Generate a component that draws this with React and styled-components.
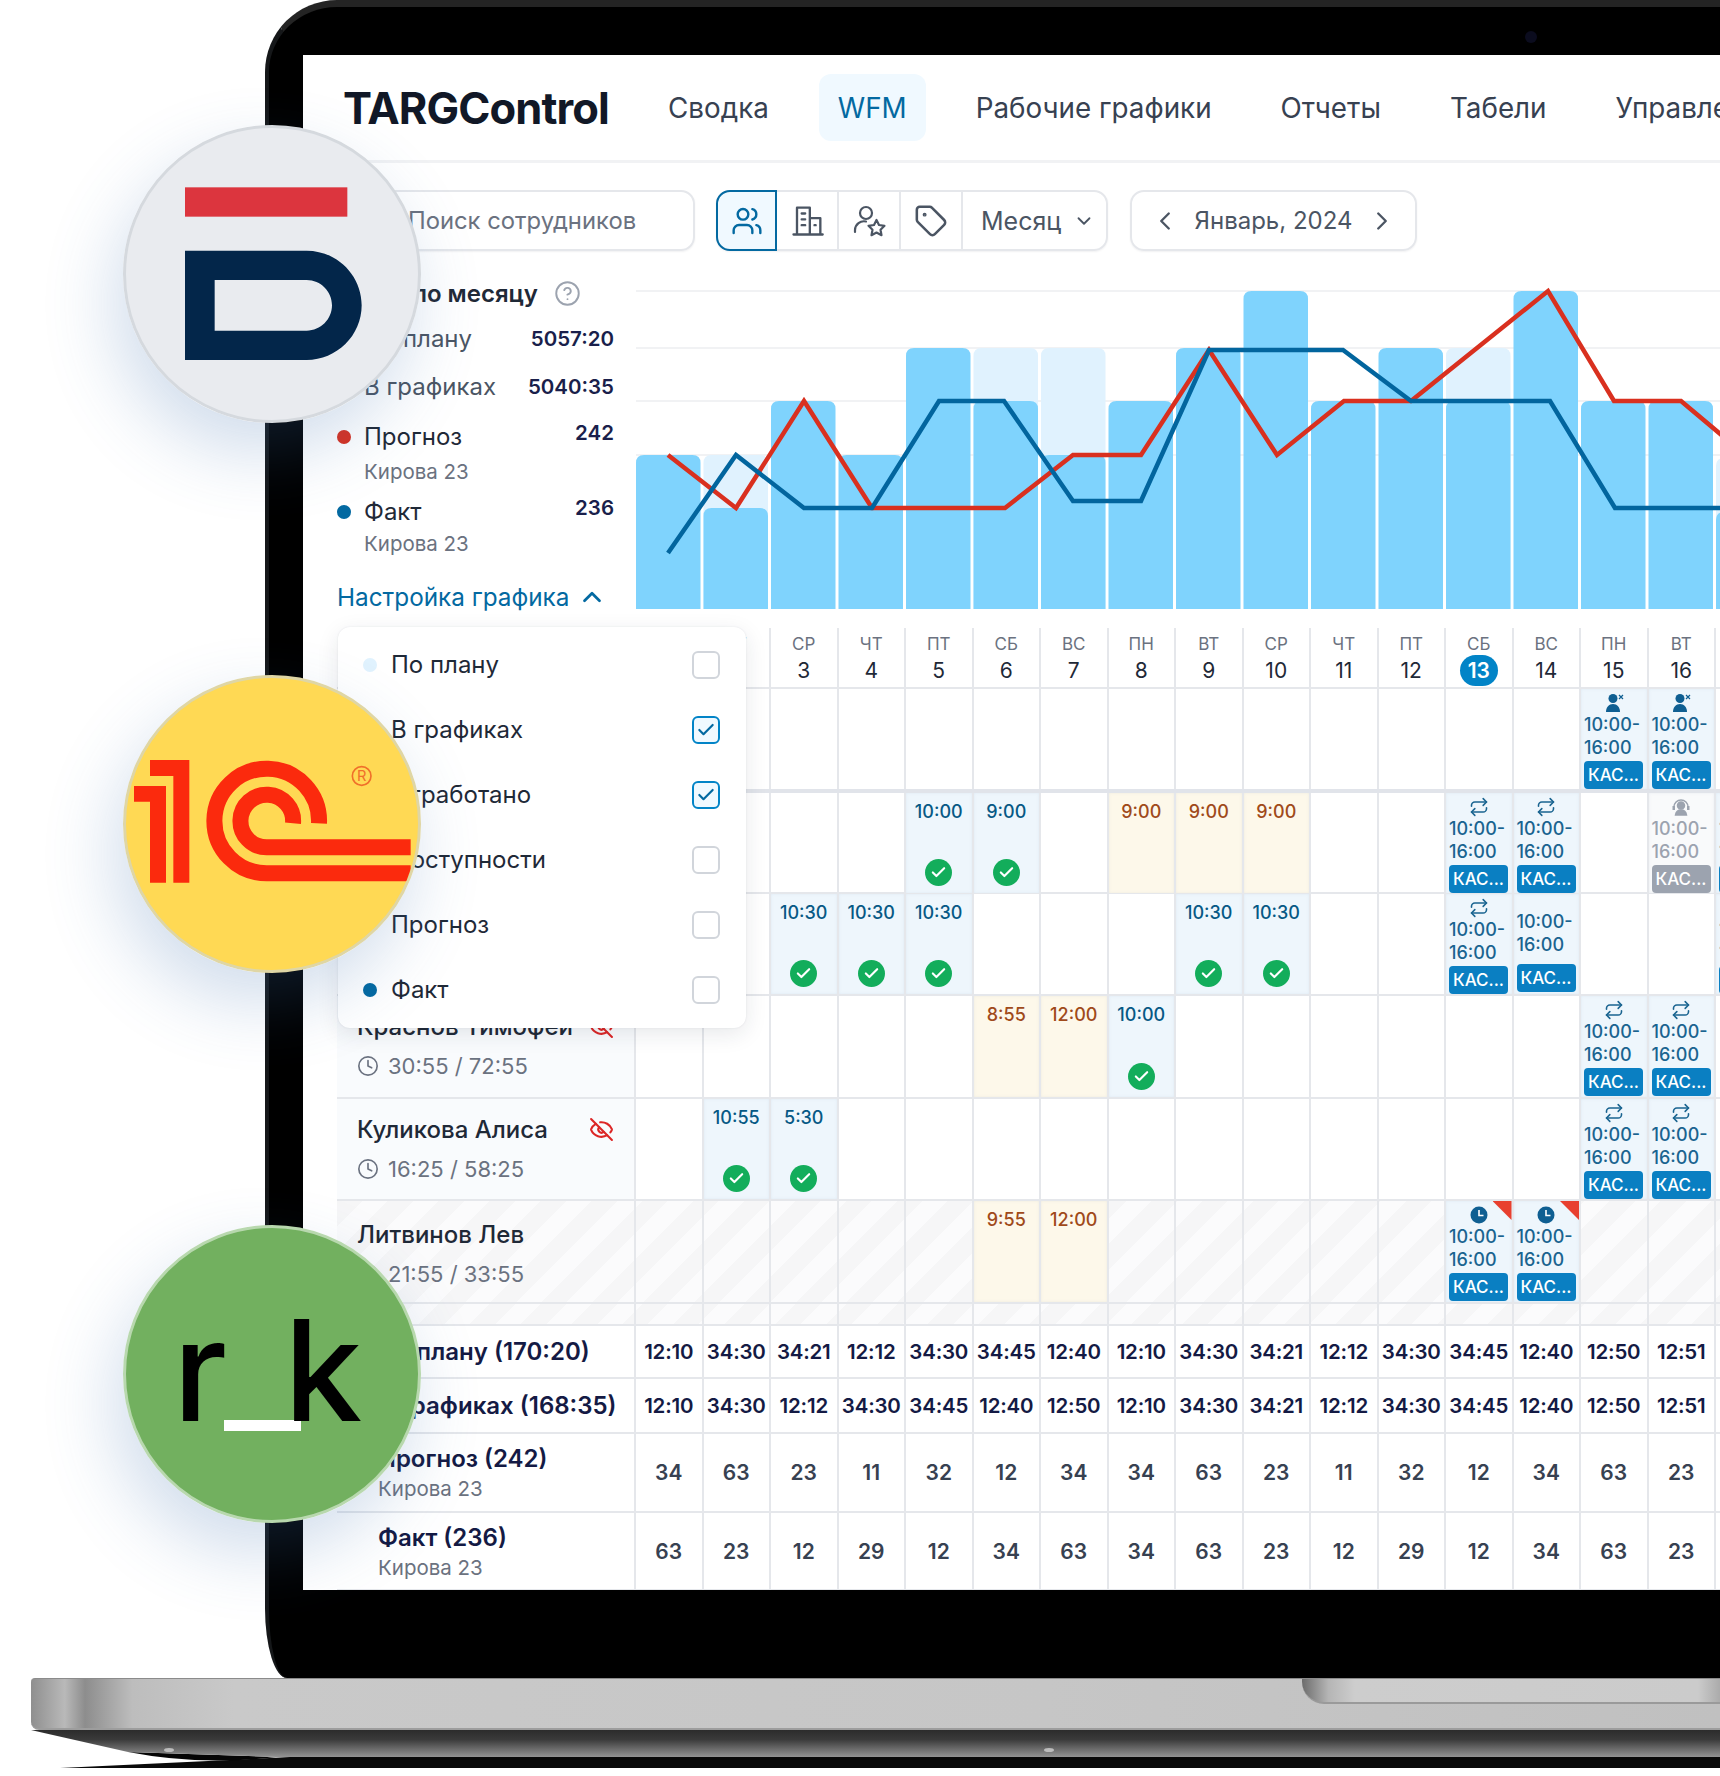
import React from 'react';
import styled, { createGlobalStyle } from 'styled-components';
import {
  Users, Tag, ChevronDown, ChevronLeft, ChevronRight, ChevronUp,
  CircleHelp, Clock, EyeOff, Repeat, Check,
} from 'lucide-react';

const GlobalStyle = createGlobalStyle`
  html, body { margin: 0; padding: 0; background: #fff; }
  * { box-sizing: border-box; }
  body { font-family: Inter, "Noto Sans", sans-serif; color: #1f2937; }
`;

const Page = styled.div`
  position: relative;
  width: 1720px;
  height: 1776px;
  overflow: hidden;
  background: #fff;
`;

const LidRow = styled.div`
  padding-left: 265px;
`;

const Lid = styled.div`
  position: relative;
  width: 1455px;
  height: 1678px;
  background: #000;
  border-top: 7px solid #242424;
  border-left: 4px solid #151719;
  border-radius: 72px 0 0 0 / 72px 0 0 0;
  border-bottom-left-radius: 22px 70px;
  padding: 48px 0 88px 34px;
`;

const Camera = styled.div`
  position: absolute;
  left: 1256px;
  top: 24px;
  width: 12px;
  height: 12px;
  border-radius: 50%;
  background: #0b0c1e;
`;

const Screen = styled.div`
  position: relative;
  width: 1417px;
  height: 1535px;
  background: #fff;
  overflow: hidden;
`;

/* top nav */
const Nav = styled.nav`
  height: 108px;
  display: flex;
  align-items: center;
  padding-left: 40px;
  gap: 31px;
  border-bottom: 3px solid #f1f2f4;
`;

const Logo = styled.div`
  flex-shrink: 0;
  width: 261px;
  margin-right: 14px;
  font-size: 43.5px;
  font-weight: 700;
  letter-spacing: -0.9px;
  color: #111827;
  white-space: nowrap;
`;

const NavItem = styled.div`
  flex-shrink: 0;
  height: 67px;
  padding: 0 19px;
  display: flex;
  align-items: center;
  border-radius: 12px;
  font-size: 27.8px;
  white-space: nowrap;
  color: ${p => (p.$active ? '#0369a1' : '#374151')};
  background: ${p => (p.$active ? '#f0f9ff' : 'transparent')};
`;

/* toolbar */
const Toolbar = styled.div`
  display: flex;
  margin: 27px 0 0 34px;
`;

const Search = styled.div`
  width: 358px;
  height: 61px;
  margin-right: 21px;
  padding-left: 69px;
  display: flex;
  align-items: center;
  border: 2px solid #e5e7eb;
  border-radius: 14px;
  box-shadow: 0 1px 2px rgba(17, 24, 39, .06);
  font-size: 23.8px;
  color: #6b7280;
`;

const ButtonGroup = styled.div`
  display: flex;
  height: 61px;
  margin-right: 22px;
  border: 2px solid #e5e7eb;
  border-radius: 14px;
  box-shadow: 0 1px 2px rgba(17, 24, 39, .06);
`;

const ToolButton = styled.div`
  width: ${p => (p.$active ? '61px' : '62px')};
  margin: ${p => (p.$active ? '-2px 0 -2px -2px' : '0')};
  display: flex;
  align-items: center;
  justify-content: center;
  color: ${p => (p.$active ? '#0369a1' : '#4b5563')};
  background: ${p => (p.$active ? '#f0f9ff' : 'transparent')};
  border: ${p => (p.$active ? '2px solid #0369a1' : 'none')};
  border-right: ${p => (p.$active ? '2px solid #0369a1' : '2px solid #e5e7eb')};
  border-radius: ${p => (p.$active ? '14px 0 0 14px' : '0')};
`;

const MonthSelect = styled.div`
  width: 143px;
  padding-left: 18px;
  display: flex;
  align-items: center;
  gap: 12px;
  font-size: 25px;
  color: #4b5563;
`;

const DatePicker = styled.div`
  width: 287px;
  height: 61px;
  padding: 0 18px;
  display: flex;
  align-items: center;
  justify-content: space-between;
  border: 2px solid #e5e7eb;
  border-radius: 14px;
  box-shadow: 0 1px 2px rgba(17, 24, 39, .06);
  font-size: 24px;
  color: #4b5563;
`;

/* summary + chart */
const ChartRow = styled.div`
  display: flex;
  height: 350px;
  margin: 27px 0 0 34px;
`;

const Summary = styled.div`
  width: 277px;
  margin-right: 22px;
  flex-shrink: 0;
`;

const SummaryTitle = styled.div`
  display: flex;
  align-items: center;
  gap: 16px;
  height: 30px;
  font-size: 24px;
  font-weight: 600;
  color: #1f2937;
  svg { color: #9ca3af; }
`;

const SummaryRow = styled.div`
  display: flex;
  justify-content: space-between;
  margin-top: ${p => p.$mt}px;
  padding-left: 27px;
`;

const SummaryLabel = styled.div`
  position: relative;
  line-height: 30px;
  font-size: 24px;
  color: ${p => (p.$strong ? '#1f2937' : '#4b5563')};
`;

const SummaryDot = styled.span`
  position: absolute;
  left: -27px;
  top: 8px;
  width: 14px;
  height: 14px;
  border-radius: 50%;
  background: ${p => p.$color};
`;

const SummaryValue = styled.div`
  line-height: ${p => (p.$top ? '22px' : '30px')};
  align-self: flex-start;
  font-size: 20.5px;
  font-weight: 600;
  color: #1a1f4b;
`;

const SummarySub = styled.div`
  margin-top: ${p => p.$mt}px;
  padding-left: 27px;
  line-height: 22px;
  font-size: 20.5px;
  color: #6b7280;
`;

const ChartToggle = styled.div`
  display: flex;
  align-items: center;
  gap: 8px;
  height: 30px;
  margin-top: 27px;
  font-size: 24.3px;
  white-space: nowrap;
  color: #0369a1;
`;

const ChartSvg = styled.svg`
  display: block;
  flex-shrink: 0;
  width: 1084px;
  height: 331px;
`;

/* table */
const TableWrap = styled.div`
  position: relative;
  margin-left: 34px;
`;

const Row = styled.div`
  display: grid;
  grid-template-columns: 297px repeat(17, 67.5px);
  height: ${p => p.$h}px;
  border-bottom: ${p => p.$thick ? '4px solid #e1e4ea' : '2px solid #e5e7eb'};
  background: ${p => p.$striped
    ? 'repeating-linear-gradient(135deg, #f6f6f7 0 18px, #fbfbfc 18px 36px)'
    : 'transparent'};
`;

const LeftCell = styled.div`
  position: relative;
  padding: ${p => p.$pt ?? 16}px 20px 0 20px;
  background: ${p => (p.$tint ? '#f9fbfd' : 'transparent')};
`;

const Name = styled.div`
  line-height: 30px;
  font-size: 24px;
  font-weight: 500;
  color: #1f2937;
`;

const EyeIcon = styled.span`
  position: absolute;
  right: 20px;
  top: 18px;
  color: #dc2626;
  line-height: 0;
`;

const Hours = styled.div`
  display: flex;
  align-items: center;
  gap: 9px;
  margin-top: 11px;
  line-height: 26px;
  font-size: 22px;
  color: #6b7280;
  svg { color: #6b7280; }
`;

const DayCell = styled.div`
  position: relative;
  min-width: 0;
  border-left: 2px solid #e5e7eb;
  display: flex;
  flex-direction: column;
  align-items: center;
  ${p => p.$center && 'justify-content: center;'}
`;

const HeadDay = styled.div`
  margin-top: 5px;
  line-height: 22px;
  font-size: 17px;
  color: #6b7280;
`;

const HeadNum = styled.div`
  display: flex;
  align-items: center;
  justify-content: center;
  width: 38px;
  height: 31px;
  border-radius: 16px;
  font-size: 21px;
  color: ${p => (p.$today ? '#fff' : '#1f2937')};
  background: ${p => (p.$today ? '#0284c7' : 'transparent')};
  font-weight: ${p => (p.$today ? 600 : 400)};
`;

const Shift = styled.div`
  align-self: stretch;
  flex: 1;
  display: flex;
  flex-direction: column;
  align-items: center;
  padding: 8px 0 7px;
  background: ${p => (p.$plan ? '#fdf8ea' : '#eef6fc')};
  box-shadow: inset 0 0 3px rgba(100, 130, 160, .10);
`;

const ShiftTime = styled.div`
  line-height: 22px;
  font-size: 18px;
  font-weight: 500;
  color: ${p => (p.$plan ? '#a04a1a' : '#075985')};
`;

const ShiftDone = styled.div`
  margin-top: auto;
  width: 27px;
  height: 27px;
  border-radius: 50%;
  background: #13ad5b;
  color: #fff;
  display: flex;
  align-items: center;
  justify-content: center;
`;

const Roster = styled.div`
  position: relative;
  align-self: stretch;
  flex: 1;
  padding: ${p => (p.$noIcon ? '16px' : '3px')} 2px 0 2px;
  background: ${p => (p.$muted ? '#f9fafb' : '#eef6fc')};
  box-shadow: inset 0 0 3px rgba(100, 130, 160, .10);
  color: ${p => (p.$muted ? '#9ca3af' : '#1a6490')};
`;

const RosterIcon = styled.div`
  height: 21px;
  display: flex;
  align-items: center;
  justify-content: center;
`;

const RosterTime = styled.div`
  padding-left: 1px;
  line-height: 23px;
  font-size: 18px;
  font-weight: 500;
  white-space: nowrap;
`;

const RosterTag = styled.div`
  width: 59px;
  height: 28px;
  margin-top: ${p => (p.$noIcon ? '8px' : '2px')};
  margin-left: 1px;
  display: flex;
  align-items: center;
  justify-content: center;
  border-radius: 4px;
  font-size: 17px;
  font-weight: 500;
  color: #fff;
  background: ${p => (p.$muted ? '#9ca3af' : '#0a7fc2')};
`;

const Corner = styled.span`
  position: absolute;
  right: 0;
  top: 0;
  width: 19px;
  height: 19px;
  background: #e8402f;
  clip-path: polygon(0 0, 100% 0, 100% 100%);
`;

const TotalLeft = styled.div`
  padding-left: 41px;
  display: flex;
  flex-direction: column;
  justify-content: center;
`;

const TotalName = styled.div`
  line-height: 30px;
  font-size: 24px;
  font-weight: 600;
  color: #141a44;
  white-space: nowrap;
`;

const TotalSub = styled.div`
  margin-top: 3px;
  line-height: 24px;
  font-size: 20.5px;
  color: #6b7280;
`;

const TotalValue = styled.div`
  font-size: ${p => (p.$time ? '20.5px' : '21px')};
  font-weight: 600;
  letter-spacing: ${p => (p.$time ? '-0.2px' : '0')};
  color: ${p => (p.$time ? '#141a44' : '#374151')};
  white-space: nowrap;
`;

/* chart settings popup */
const Dropdown = styled.div`
  position: absolute;
  left: 1px;
  top: -1px;
  width: 408px;
  height: 401px;
  padding: 5px 26px 0 25px;
  background: #fff;
  border-radius: 12px;
  box-shadow: 0 6px 22px rgba(31, 41, 55, .10), 0 0 2px rgba(31, 41, 55, .10);
  z-index: 2;
`;

const DropdownRow = styled.div`
  height: 65px;
  display: flex;
  align-items: center;
  font-size: 24px;
  color: #1f2937;
`;

const DropdownDot = styled.span`
  width: 14px;
  height: 14px;
  margin-right: 14px;
  border-radius: 50%;
  background: ${p => p.$color};
`;

const Checkbox = styled.span`
  width: 28px;
  height: 28px;
  margin-left: auto;
  display: flex;
  align-items: center;
  justify-content: center;
  border-radius: 6px;
  border: 2px solid ${p => (p.$on ? '#0284c7' : '#d1d5db')};
  background: ${p => (p.$on ? '#f0f9ff' : '#fff')};
  color: #0369a1;
`;

/* logos over the laptop */
const Badge = styled.div`
  position: absolute;
  left: ${p => p.$x}px;
  top: ${p => p.$y}px;
  width: 298px;
  height: 298px;
  border-radius: 50%;
  overflow: hidden;
  border: 3px solid ${p => p.$ring};
  background: ${p => p.$bg};
  z-index: 3;
`;

const BadgeShadow = styled.div`
  position: absolute;
  left: ${p => p.$x}px;
  top: ${p => p.$y}px;
  width: 298px;
  height: 298px;
  border-radius: 50%;
  box-shadow: -10px 30px 70px rgba(62, 112, 176, .24);
  z-index: 3;
`;

const BadgeLogo = styled.svg`
  display: block;
  width: 100%;
  height: 100%;
`;

const RkLogo = styled.div`
  position: relative;
  height: 100%;
  font-family: Inter, sans-serif;
  font-size: 140px;
  font-weight: 500;
  line-height: 1;
  color: #000;
`;

const RkLetter = styled.span`
  position: absolute;
  top: ${p => p.$top}px;
  left: ${p => p.$left}px;
`;

const RkBar = styled.span`
  position: absolute;
  left: 98px;
  top: 192px;
  width: 77px;
  height: 11px;
  background: #fff;
`;

/* laptop base */
const Base = styled.div`
  position: relative;
  height: 52px;
  margin-left: 31px;
  border-top: 1px solid #8b8b8b;
  border-bottom: 2px solid #9d9d9d;
  border-radius: 4px 0 0 8px;
  background: linear-gradient(90deg, #8f8f8f 0, #b9b9b9 2%, #8d8d8d 3.2%, #bdbdbd 6%, #c9c9c9 12%, #c6c6c6 60%, #c0c0c0 100%);
`;

const BaseNotch = styled.div`
  position: absolute;
  left: 1271px;
  top: 0;
  width: 440px;
  height: 25px;
  border-radius: 0 0 22px 22px;
  border-bottom: 2px solid #9a9a9a;
  background: linear-gradient(90deg, #6c6c6c 0, #b5b5b5 6%, #cdcdcd 12%, #cbcbcb 90%, #8b8b8b 100%);
`;

const FrontSvg = styled.svg`
  display: block;
  width: 1720px;
  height: 38px;
`;

const barPath = (x, top) => {
  const w = 64.5, r = 8;
  return `M${x} 609V${top + r}Q${x} ${top} ${x + r} ${top}H${x + w - r}Q${x + w} ${top} ${x + w} ${top + r}V609Z`;
};

const darkTops = [455, 508, 401, 455, 348, 401, 455, 401, 348, 291, 401, 348, 401, 291, 401, 401, 512];
const lightTops = { 1: 455, 5: 348, 6: 348, 12: 348, 16: 458 };
const redLine = '668,455 736,508 804,401 872,508 1005,508 1073,455 1141,455 1209,350 1277,455 1344,401 1411,401 1548,291 1614,401 1681,401 1749,458';
const blueLine = '668,553 736,455 804,508 872,508 939,401 1004,401 1073,501 1141,501 1209,350 1343,350 1411,401 1550,401 1615,508 1760,508';

const Chart = () => (
  <ChartSvg viewBox="636 278 1084 331">
    {[291, 348, 401, 455].map(y => (
      <line key={y} x1="636" x2="1720" y1={y} y2={y} stroke="#f1f2f4" strokeWidth="2" />
    ))}
    {Object.entries(lightTops).map(([i, top]) => (
      <path key={i} d={barPath(636 + 67.5 * i, top)} fill="#e0f2fe" />
    ))}
    {darkTops.map((top, i) => (
      <path key={i} d={barPath(636 + 67.5 * i, top)} fill="#7fd3fd" />
    ))}
    <polyline points={redLine} fill="none" stroke="#d9301f" strokeWidth="4.5" strokeLinejoin="miter" />
    <polyline points={blueLine} fill="none" stroke="#02659e" strokeWidth="4.5" strokeLinejoin="miter" />
  </ChartSvg>
);

const BuildingIcon = () => (
  <svg width="35" height="35" viewBox="0 0 30 30" fill="none" stroke="currentColor" strokeWidth="2" strokeLinejoin="round" strokeLinecap="round">
    <path d="M3 27h25M6 27V4h11v23M17 13h9v14" />
    <path d="M10 9h3M10 14h3M10 19h3M21 19h1" />
  </svg>
);

const UserStarIcon = () => (
  <svg width="34" height="34" viewBox="0 0 34 34" fill="none" stroke="currentColor" strokeWidth="2.2" strokeLinejoin="round" strokeLinecap="round">
    <circle cx="14" cy="9" r="6" />
    <path d="M3 28v-2a9 9 0 0 1 11-8.500" />
    <path d="M24.500 16l2.500 5 5.500.8-4 3.900 1 5.500-5-2.600-5 2.600 1-5.500-4-3.900 5.500-.8z" />
  </svg>
);

const UserXIcon = () => (
  <svg width="20" height="20" viewBox="0 0 20 20" fill="#0f5f92">
    <circle cx="9" cy="5.500" r="4.500" />
    <path d="M2 19c0-5 3-8 7-8s7 3 7 8z" />
    <path d="M15 2l4 4M19 2l-4 4" stroke="#0f5f92" strokeWidth="1.200" />
  </svg>
);

const HeadsetIcon = () => (
  <svg width="20" height="20" viewBox="0 0 20 20" fill="none" stroke="#9ca3af" strokeWidth="1.500">
    <path d="M3 10a7 7 0 0 1 14 0" />
    <circle cx="10" cy="8.500" r="3.500" fill="#9ca3af" />
    <path d="M4.500 18c.5-3.500 2.500-5 5.500-5s5 1.500 5.500 5z" fill="#9ca3af" />
    <rect x="1.500" y="9" width="2.500" height="4" fill="#9ca3af" stroke="none" />
    <rect x="16" y="9" width="2.500" height="4" fill="#9ca3af" stroke="none" />
  </svg>
);

const ClockFilled = () => (
  <svg width="18" height="18" viewBox="0 0 18 18">
    <circle cx="9" cy="9" r="8.500" fill="#0f5f92" />
    <path d="M9 4v5.500h4.500" fill="none" stroke="#fff" strokeWidth="1.600" />
  </svg>
);

const rosterIcons = {
  swap: <Repeat size={20} strokeWidth={1.9} />,
  userx: <UserXIcon />,
  headset: <HeadsetIcon />,
  clock: <ClockFilled />,
};

const RosterCell = ({ icon, muted, noIcon, corner }) => (
  <Roster $muted={muted} $noIcon={noIcon}>
    {corner && <Corner />}
    {!noIcon && <RosterIcon>{rosterIcons[icon]}</RosterIcon>}
    <RosterTime>10:00-</RosterTime>
    <RosterTime>16:00</RosterTime>
    <RosterTag $muted={muted} $noIcon={noIcon}>КАС...</RosterTag>
  </Roster>
);

const ShiftCell = ({ time, plan }) => (
  <Shift $plan={plan}>
    <ShiftTime $plan={plan}>{time}</ShiftTime>
    {!plan && (
      <ShiftDone>
        <Check size={17} strokeWidth={3} />
      </ShiftDone>
    )}
  </Shift>
);

const s = (time) => ({ kind: 'shift', time });
const p = (time) => ({ kind: 'plan', time });
const r = (icon, extra = {}) => ({ kind: 'roster', icon, ...extra });

const staffRows = [
  { h: 104, thick: true, cells: { 15: r('userx'), 16: r('userx') } },
  {
    h: 101,
    cells: {
      5: s('10:00'), 6: s('9:00'), 8: p('9:00'), 9: p('9:00'), 10: p('9:00'),
      13: r('swap'), 14: r('swap'), 16: r('headset', { muted: true }), 17: r('swap'),
    },
  },
  {
    h: 102,
    cells: {
      3: s('10:30'), 4: s('10:30'), 5: s('10:30'), 9: s('10:30'), 10: s('10:30'),
      13: r('swap'), 14: r('swap', { noIcon: true }), 17: r('swap'),
    },
  },
  {
    h: 103, name: 'Краснов Тимофей', hours: '30:55 / 72:55', hidden: true, tint: true,
    cells: { 6: p('8:55'), 7: p('12:00'), 8: s('10:00'), 15: r('swap'), 16: r('swap') },
  },
  {
    h: 102, name: 'Куликова Алиса', hours: '16:25 / 58:25', hidden: true, tint: true,
    cells: { 2: s('10:55'), 3: s('5:30'), 15: r('swap'), 16: r('swap') },
  },
  {
    h: 103, name: 'Литвинов Лев', hours: '21:55 / 33:55', striped: true, pt: 19,
    cells: {
      6: p('9:55'), 7: p('12:00'),
      13: r('clock', { corner: true }), 14: r('clock', { corner: true }),
    },
  },
];

const days = Array.from({ length: 17 }, (_, i) => i + 1);
const weekNames = ['ПН', 'ВТ', 'СР', 'ЧТ', 'ПТ', 'СБ', 'ВС'];

const totals = [
  {
    h: 53, name: 'По плану (170:20)', time: true,
    values: ['12:10', '34:30', '34:21', '12:12', '34:30', '34:45', '12:40', '12:10', '34:30', '34:21', '12:12', '34:30', '34:45', '12:40', '12:50', '12:51'],
  },
  {
    h: 55, name: 'В графиках (168:35)', time: true,
    values: ['12:10', '34:30', '12:12', '34:30', '34:45', '12:40', '12:50', '12:10', '34:30', '34:21', '12:12', '34:30', '34:45', '12:40', '12:50', '12:51'],
  },
  {
    h: 79, name: 'Прогноз (242)', sub: 'Кирова 23',
    values: ['34', '63', '23', '11', '32', '12', '34', '34', '63', '23', '11', '32', '12', '34', '63', '23'],
  },
  {
    h: 78, name: 'Факт (236)', sub: 'Кирова 23',
    values: ['63', '23', '12', '29', '12', '34', '63', '34', '63', '23', '12', '29', '12', '34', '63', '23'],
  },
];

const chartOptions = [
  { label: 'По плану', color: '#e0f2fe' },
  { label: 'В графиках', color: '#7fd3fd', on: true },
  { label: 'Отработано', color: '#7fd3fd', on: true },
  { label: 'Доступности', color: '#fde68a' },
  { label: 'Прогноз', color: '#d9301f' },
  { label: 'Факт', color: '#0369a1' },
];

const renderCell = (cell) => {
  if (!cell) return null;
  if (cell.kind === 'roster') return <RosterCell {...cell} />;
  return <ShiftCell time={cell.time} plan={cell.kind === 'plan'} />;
};

export default function App() {
  return (
    <Page>
      <GlobalStyle />
      <LidRow>
        <Lid>
          <Camera />
          <Screen>
            <Nav>
              <Logo>TARGControl</Logo>
              <NavItem>Сводка</NavItem>
              <NavItem $active>WFM</NavItem>
              <NavItem>Рабочие графики</NavItem>
              <NavItem>Отчеты</NavItem>
              <NavItem>Табели</NavItem>
              <NavItem>Управление</NavItem>
            </Nav>

            <Toolbar>
              <Search>Поиск сотрудников</Search>
              <ButtonGroup>
                <ToolButton $active><Users size={32} strokeWidth={1.8} /></ToolButton>
                <ToolButton><BuildingIcon /></ToolButton>
                <ToolButton><UserStarIcon /></ToolButton>
                <ToolButton><Tag size={34} strokeWidth={1.8} /></ToolButton>
                <MonthSelect>Месяц <ChevronDown size={22} strokeWidth={2} /></MonthSelect>
              </ButtonGroup>
              <DatePicker>
                <ChevronLeft size={30} strokeWidth={1.9} />
                Январь, 2024
                <ChevronRight size={30} strokeWidth={1.9} />
              </DatePicker>
            </Toolbar>

            <ChartRow>
              <Summary>
                <SummaryTitle>Итого по месяцу <CircleHelp size={27} strokeWidth={1.7} /></SummaryTitle>
                <SummaryRow $mt={16}>
                  <SummaryLabel>По плану</SummaryLabel>
                  <SummaryValue>5057:20</SummaryValue>
                </SummaryRow>
                <SummaryRow $mt={18}>
                  <SummaryLabel>В графиках</SummaryLabel>
                  <SummaryValue>5040:35</SummaryValue>
                </SummaryRow>
                <SummaryRow $mt={20}>
                  <SummaryLabel $strong><SummaryDot $color="#d9301f" />Прогноз</SummaryLabel>
                  <SummaryValue $top>242</SummaryValue>
                </SummaryRow>
                <SummarySub $mt={9}>Кирова 23</SummarySub>
                <SummaryRow $mt={14}>
                  <SummaryLabel $strong><SummaryDot $color="#0369a1" />Факт</SummaryLabel>
                  <SummaryValue $top>236</SummaryValue>
                </SummaryRow>
                <SummarySub $mt={6}>Кирова 23</SummarySub>
                <ChartToggle>Настройка графика <ChevronUp size={30} strokeWidth={2.2} /></ChartToggle>
              </Summary>
              <Chart />
            </ChartRow>

            <TableWrap>
              <Row $h={61}>
                <div />
                {days.map(d => (
                  <DayCell key={d}>
                    <HeadDay>{weekNames[(d - 1) % 7]}</HeadDay>
                    <HeadNum $today={d === 13}>{d}</HeadNum>
                  </DayCell>
                ))}
              </Row>

              {staffRows.map((row, i) => (
                <Row key={i} $h={row.h} $thick={row.thick} $striped={row.striped}>
                  <LeftCell $pt={row.pt} $tint={row.tint}>
                    {row.name && <Name>{row.name}</Name>}
                    {row.hidden && <EyeIcon><EyeOff size={25} strokeWidth={2} /></EyeIcon>}
                    {row.hours && <Hours><Clock size={22} strokeWidth={1.8} />{row.hours}</Hours>}
                  </LeftCell>
                  {days.map(d => <DayCell key={d}>{renderCell(row.cells[d])}</DayCell>)}
                </Row>
              ))}

              <Row $h={22} $striped>
                <div />
                {days.map(d => <DayCell key={d} />)}
              </Row>

              {totals.map(t => (
                <Row key={t.name} $h={t.h}>
                  <TotalLeft>
                    <TotalName>{t.name}</TotalName>
                    {t.sub && <TotalSub>{t.sub}</TotalSub>}
                  </TotalLeft>
                  {t.values.map((v, i) => (
                    <DayCell key={i} $center><TotalValue $time={t.time}>{v}</TotalValue></DayCell>
                  ))}
                  <DayCell />
                </Row>
              ))}

              <Dropdown>
                {chartOptions.map(o => (
                  <DropdownRow key={o.label}>
                    <DropdownDot $color={o.color} />
                    {o.label}
                    <Checkbox $on={o.on}>{o.on && <Check size={20} strokeWidth={2.6} />}</Checkbox>
                  </DropdownRow>
                ))}
              </Dropdown>
            </TableWrap>
          </Screen>
        </Lid>
      </LidRow>

      <Base>
        <BaseNotch />
      </Base>
      <FrontSvg viewBox="0 0 1720 38">
        <defs>
          <linearGradient id="frontEdge" x1="0" x2="0" y1="0" y2="1">
            <stop offset="0" stopColor="#2c2c2c" />
            <stop offset="0.35" stopColor="#3a3a3a" />
            <stop offset="1" stopColor="#949494" />
          </linearGradient>
        </defs>
        <path d="M60 38L290 27H1720V38Z" fill="#0a0a0a" />
        <path d="M128 22Q200 36 276 27Z" fill="#050505" />
        <path d="M31 0L44 3L128 22L276 27H1720V0Z" fill="url(#frontEdge)" />
        <ellipse cx="169" cy="20" rx="5" ry="2" fill="#bdbdbd" />
        <ellipse cx="1049" cy="20" rx="5" ry="2" fill="#bdbdbd" />
      </FrontSvg>

      <BadgeShadow $x={123} $y={125} />
      <Badge $x={123} $y={125} $bg="#e9ebef" $ring="#d5d9de">
        <BadgeLogo viewBox="48 54 876 876">
          <rect x="225" y="232" width="487" height="88" fill="#dc353e" />
          <path fillRule="evenodd" fill="#03264a" d="M225 422H590C680 422 755 495 755 586C755 677 680 750 590 750H225ZM314 510V662H590C632 662 666 628 666 586C666 544 632 510 590 510Z" />
        </BadgeLogo>
      </Badge>

      <BadgeShadow $x={123} $y={675} />
      <Badge $x={123} $y={675} $bg="#ffd954" $ring="#dfd6a5">
        <BadgeLogo viewBox="48 54 876 876">
          <path fill="#fb2a0d" d="M120 300H238V668H190V348H120ZM72 378H168V668H120V425H72Z" />
          <path fill="none" stroke="#fb2a0d" strokeWidth="48" d="M627 490A157 157 0 1 0 470 640H902" />
          <path fill="none" stroke="#fb2a0d" strokeWidth="48" d="M549 490A79 79 0 1 0 470 562H902" />
          <circle cx="755" cy="348" r="28" fill="none" stroke="#f0702a" strokeWidth="5" />
          <text x="755" y="364" textAnchor="middle" fontFamily="Inter, sans-serif" fontSize="44" fill="#f0702a">R</text>
        </BadgeLogo>
      </Badge>

      <BadgeShadow $x={123} $y={1225} />
      <Badge $x={123} $y={1225} $bg="#72b05f" $ring="#b8d8ae">
        <RkLogo>
          <RkLetter $left={47} $top={72}>r</RkLetter>
          <RkBar />
          <RkLetter $left={158} $top={72}>k</RkLetter>
        </RkLogo>
      </Badge>
    </Page>
  );
}
